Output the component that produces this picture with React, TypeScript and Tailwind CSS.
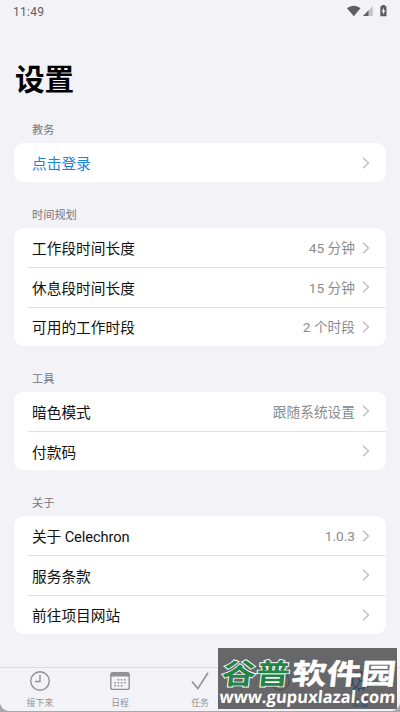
import React from "react";

interface SettingRow {
  label: string;
  value?: string;
  link?: boolean;
}

interface SettingSection {
  title: string;
  rows: SettingRow[];
}

const SECTIONS: SettingSection[] = [
  { title: "教务", rows: [{ label: "点击登录", link: true }] },
  {
    title: "时间规划",
    rows: [
      { label: "工作段时间长度", value: "45 分钟" },
      { label: "休息段时间长度", value: "15 分钟" },
      { label: "可用的工作时段", value: "2 个时段" },
    ],
  },
  {
    title: "工具",
    rows: [{ label: "暗色模式", value: "跟随系统设置" }, { label: "付款码" }],
  },
  {
    title: "关于",
    rows: [
      { label: "关于 Celechron", value: "1.0.3" },
      { label: "服务条款" },
      { label: "前往项目网站" },
    ],
  },
];

function StatusBar() {
  return (
    <header className="flex h-[22px] items-center justify-between pl-[13px] pr-[12px] text-[#5f5f62]">
      <span className="pt-px text-[12px] leading-none tracking-[0.3px]">11:49</span>
      <svg className="h-[14px] w-[42px]" viewBox="0 0 42 14" fill="currentColor">
        <path d="M1 4.2C5 .8 10.5.8 14.5 4.2L7.8 12.3Z" />
        <path d="M26.8 2v10H17Z" opacity="0.3" />
        <path d="M22.5 6.4V12H17Z" />
        <path
          fillRule="evenodd"
          d="M34.3 2.3h1.5V1h3.2v1.3h1.5v9.9h-6.2ZM38 3.8l-2.4 4h1.4v3l2.3-4.2H38Z"
        />
      </svg>
    </header>
  );
}

function Chevron() {
  return (
    <svg className="ml-[7px] h-[12px] w-[8px] shrink-0" viewBox="0 0 8 12" fill="none" stroke="#bcbcbf" strokeWidth="1.3">
      <path d="M1 .7 6.5 6 1 11.3" />
    </svg>
  );
}

function Section({ title, rows }: SettingSection) {
  return (
    <section>
      <h2 className="mb-[4px] pl-[18px] text-[11.2px] leading-4 text-[#76767a]">{title}</h2>
      <ul className="overflow-hidden rounded-[9px] bg-white">
        {rows.map((row, index) => (
          <li key={row.label} className="pl-[14px]">
            <div
              className={`flex h-[39.35px] items-center pl-1 pr-[16px] ${
                index > 0 ? "border-t border-[#e2e2e4]" : ""
              }`}
            >
              <span
                className={`flex-1 pt-[3px] text-[14.7px] leading-5 ${
                  row.link ? "text-[#1a7fe8]" : "text-[#111111]"
                } ${row.label.includes("Celechron") ? "tracking-[-0.12px]" : ""}`}
              >
                {row.label}
              </span>
              {row.value && <span className="pt-px text-[13.7px] leading-5 text-[#8b8b8e]">{row.value}</span>}
              <Chevron />
            </div>
          </li>
        ))}
      </ul>
    </section>
  );
}

function ClockIcon() {
  return (
    <svg className="h-[22px] w-[22px]" viewBox="0 0 22 22" fill="none" stroke="currentColor" strokeWidth="1.4">
      <circle cx="11" cy="11" r="9.3" />
      <path d="M11 4.8V11.5H6" />
    </svg>
  );
}

function CalendarIcon() {
  return (
    <svg className="h-[22px] w-[22px]" viewBox="0 0 22 22" fill="none" stroke="currentColor">
      <rect x="1.8" y="2.6" width="18.4" height="16.8" rx="2" strokeWidth="1.4" />
      <path d="M2 4.7h18" strokeWidth="3.4" />
      <path d="M8.6 9.7h9M5.4 12.7h12.2M5.4 15.7h9" strokeWidth="1.5" strokeDasharray="1.6 1.6" />
    </svg>
  );
}

function CheckIcon() {
  return (
    <svg className="h-[22px] w-[22px]" viewBox="0 0 22 22" fill="none" stroke="currentColor" strokeWidth="1.7">
      <path d="M3 11.5 8.8 18.6 19 2.8" />
    </svg>
  );
}

function PersonIcon() {
  return (
    <svg className="h-[22px] w-[22px]" viewBox="0 0 22 22" fill="none" stroke="currentColor" strokeWidth="1.4">
      <circle cx="11" cy="11" r="9" />
    </svg>
  );
}

function GearIcon() {
  return (
    <svg className="h-[22px] w-[22px]" viewBox="0 0 22 22" fill="none" stroke="currentColor" strokeWidth="1.4">
      <circle cx="11" cy="11" r="7.6" />
      <circle cx="11" cy="11" r="9.2" strokeWidth="2" strokeDasharray="2 2.8" />
      <path d="M11 11h7.5M11 11 7.2 4.5M11 11l-3.8 6.5" />
    </svg>
  );
}

const TABS = [
  { label: "接下来", icon: ClockIcon },
  { label: "日程", icon: CalendarIcon },
  { label: "任务", icon: CheckIcon },
  { label: "", icon: PersonIcon },
  { label: "设置", icon: GearIcon, active: true },
];

function TabBar() {
  return (
    <nav className="grid h-[44px] grid-cols-5 rounded-b-[9px] border-t border-[#dcdce0] bg-[#f2f2f7]">
      {TABS.map(({ label, icon: Icon, active }, index) => (
        <div
          key={index}
          className={`flex flex-col items-center pt-[2px] ${active ? "text-[#0070f0]" : "text-[#929295]"}`}
        >
          <Icon />
          <span className="mt-[5px] text-[8.8px] leading-[12px]">{label}</span>
        </div>
      ))}
    </nav>
  );
}

function Watermark() {
  return (
    <div className="absolute left-[218px] top-[648px] h-[61px] w-[179px] bg-[#404042]/78">
      <svg
        className="h-full w-full overflow-visible"
        viewBox="0 0 179 61"
        fontFamily="'Noto Sans CJK SC', sans-serif"
        fontWeight="700"
      >
        <g transform="translate(5 35.5) skewX(-6) scale(1 0.86)" fontSize="33">
          <text
            x="-2"
            y="0"
            textLength="68"
            lengthAdjust="spacingAndGlyphs"
            fill="#258345"
            stroke="#ffffff"
            strokeWidth="2"
            paintOrder="stroke"
          >
            谷普
          </text>
          <text
            x="68"
            y="0"
            textLength="104"
            lengthAdjust="spacingAndGlyphs"
            fill="#ffffff"
            stroke="#ffffff"
            strokeWidth="0.6"
          >
            软件园
          </text>
        </g>
        <text
          x="1"
          y="0"
          transform="translate(0 55.2) skewX(-5)"
          fontFamily="'Open Sans', sans-serif"
          fontSize="17"
          textLength="176"
          lengthAdjust="spacingAndGlyphs"
          fill="#ffffff"
        >
          www.gupuxlazal.com
        </text>
      </svg>
    </div>
  );
}

export default function App() {
  return (
    <div className="relative h-[712px] w-[400px] overflow-hidden bg-[#a9a9ac] font-[Roboto,'Noto_Sans_CJK_SC',sans-serif]">
      <div className="flex h-[711px] flex-col overflow-hidden rounded-b-[9px] bg-[#f2f2f7]">
        <StatusBar />
        <h1 className="mt-[38px] pl-[15px] text-[29.6px] font-bold leading-10 text-black">设置</h1>
        <main className="mt-[23px] flex flex-1 flex-col gap-[25.6px] px-[14px]">
          {SECTIONS.map((section) => (
            <Section key={section.title} {...section} />
          ))}
        </main>
        <TabBar />
      </div>
      <Watermark />
    </div>
  );
}
